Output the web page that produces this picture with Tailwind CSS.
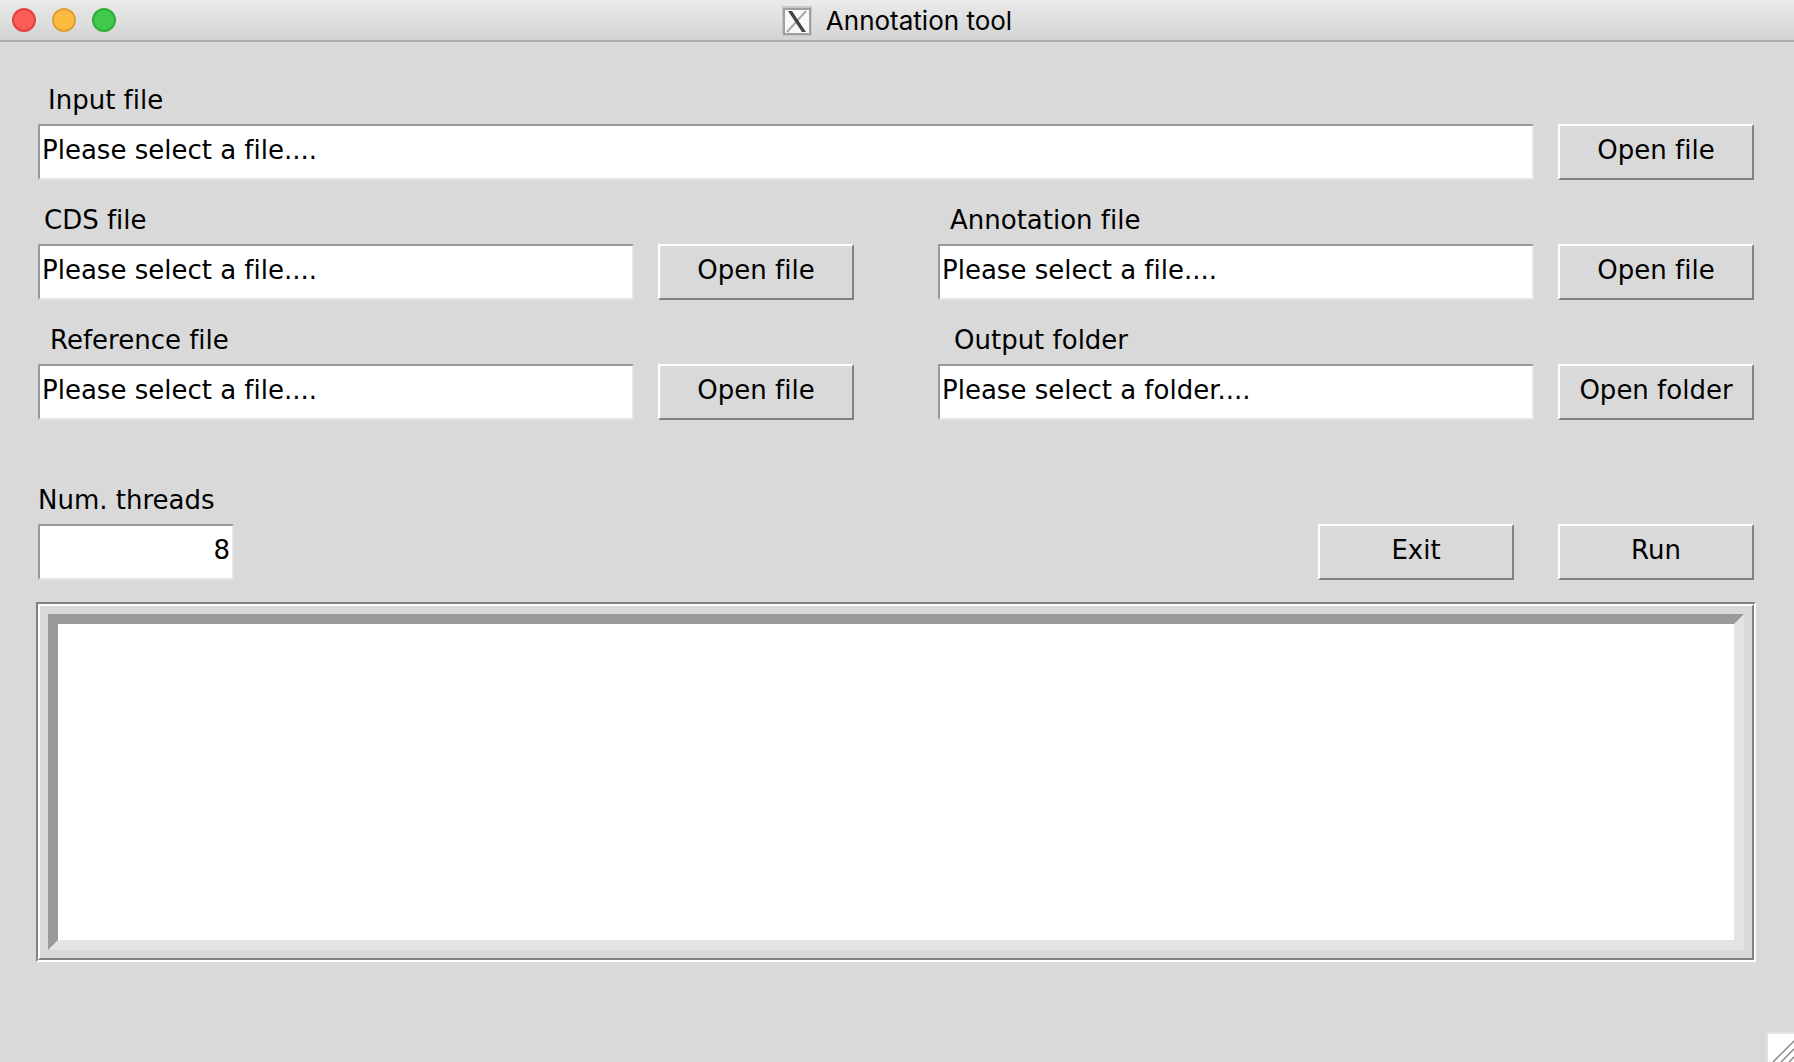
<!DOCTYPE html>
<html lang="en">
<head>
<meta charset="utf-8">
<title>Annotation tool</title>
<script src="https://cdn.jsdelivr.net/npm/@tailwindcss/browser@4"></script>
</head>
<body class="relative flex min-h-screen flex-col bg-[#d9d9d9] font-['DejaVu_Sans',sans-serif] text-[26px] leading-8 text-black [font-variant-ligatures:none]">
  <header class="relative flex h-[42px] items-center justify-center border-b-2 border-[#acacac] bg-linear-to-b from-[#ebebeb] to-[#d3d3d3]">
    <div class="absolute top-2 left-3 flex gap-4">
      <button type="button" aria-label="Close" class="size-6 rounded-full border-2 border-[#e0443e] bg-[#fc5b57]"></button>
      <button type="button" aria-label="Minimize" class="size-6 rounded-full border-2 border-[#dea035] bg-[#fdbc40]"></button>
      <button type="button" aria-label="Zoom" class="size-6 rounded-full border-2 border-[#2eae36] bg-[#42c84c]"></button>
    </div>
    <h1 class="flex items-center gap-3.5 pt-0.5 font-['Inter',sans-serif] text-[26px] leading-10">
      <svg class="size-[30px]" viewBox="0 0 30 30" fill="none" aria-hidden="true">
        <rect x="0" y="0" width="30" height="30" fill="#c8c8c8"/>
        <rect x="2" y="3" width="26" height="25" fill="#f8f8f8" stroke="#a0a0a0" stroke-width="2"/>
        <path d="M24 5 5 26" stroke="#aaa" stroke-width="2"/>
        <path d="M6 5h4l14 21h-4z" fill="#444"/>
      </svg>
      Annotation tool
    </h1>
  </header>

  <main class="flex flex-col pt-8 pr-10 pl-[38px]">
    <form class="grid grid-cols-2 gap-x-[84px]">
      <div class="col-span-2">
        <label for="input-file" class="block h-[50px] pt-2.5 pl-2.5">Input file</label>
        <div class="flex gap-6">
          <input id="input-file" type="text" value="Please select a file...." class="h-14 min-w-0 flex-1 border-2 border-t-[#999] border-r-[#e4e4e4] border-b-[#e4e4e4] border-l-[#999] bg-white pl-0.5 pb-1">
          <button type="button" class="h-14 w-[196px] border-2 border-t-white border-r-[#828282] border-b-[#828282] border-l-white pb-1">Open file</button>
        </div>
      </div>
      <div>
        <label for="cds-file" class="block h-16 pt-6 pl-1.5">CDS file</label>
        <div class="flex gap-6">
          <input id="cds-file" type="text" value="Please select a file...." class="h-14 min-w-0 flex-1 border-2 border-t-[#999] border-r-[#e4e4e4] border-b-[#e4e4e4] border-l-[#999] bg-white pl-0.5 pb-1">
          <button type="button" class="h-14 w-[196px] border-2 border-t-white border-r-[#828282] border-b-[#828282] border-l-white pb-1">Open file</button>
        </div>
      </div>
      <div>
        <label for="annotation-file" class="block h-16 pt-6 pl-3">Annotation file</label>
        <div class="flex gap-6">
          <input id="annotation-file" type="text" value="Please select a file...." class="h-14 min-w-0 flex-1 border-2 border-t-[#999] border-r-[#e4e4e4] border-b-[#e4e4e4] border-l-[#999] bg-white pl-0.5 pb-1">
          <button type="button" class="h-14 w-[196px] border-2 border-t-white border-r-[#828282] border-b-[#828282] border-l-white pb-1">Open file</button>
        </div>
      </div>
      <div>
        <label for="reference-file" class="block h-16 pt-6 pl-3">Reference file</label>
        <div class="flex gap-6">
          <input id="reference-file" type="text" value="Please select a file...." class="h-14 min-w-0 flex-1 border-2 border-t-[#999] border-r-[#e4e4e4] border-b-[#e4e4e4] border-l-[#999] bg-white pl-0.5 pb-1">
          <button type="button" class="h-14 w-[196px] border-2 border-t-white border-r-[#828282] border-b-[#828282] border-l-white pb-1">Open file</button>
        </div>
      </div>
      <div>
        <label for="output-folder" class="block h-16 pt-6 pl-4">Output folder</label>
        <div class="flex gap-6">
          <input id="output-folder" type="text" value="Please select a folder...." class="h-14 min-w-0 flex-1 border-2 border-t-[#999] border-r-[#e4e4e4] border-b-[#e4e4e4] border-l-[#999] bg-white pl-0.5 pb-1">
          <button type="button" class="h-14 w-[196px] border-2 border-t-white border-r-[#828282] border-b-[#828282] border-l-white pb-1">Open folder</button>
        </div>
      </div>
      <div class="col-span-2 flex items-end justify-between pt-10">
        <div>
          <label for="threads" class="block h-16 pt-6">Num. threads</label>
          <input id="threads" type="text" inputmode="numeric" value="8" class="block h-14 w-[196px] border-2 border-t-[#999] border-r-[#e4e4e4] border-b-[#e4e4e4] border-l-[#999] bg-white pr-0.5 pb-1 text-right">
        </div>
        <div class="flex gap-11">
          <button type="button" class="h-14 w-[196px] border-2 border-t-white border-r-[#828282] border-b-[#828282] border-l-white pb-1">Exit</button>
          <button type="button" class="h-14 w-[196px] border-2 border-t-white border-r-[#828282] border-b-[#828282] border-l-white pb-1">Run</button>
        </div>
      </div>
    </form>
    <div class="-mr-0.5 -ml-0.5 mt-[22px] border-2 border-t-[#828282] border-r-white border-b-white border-l-[#828282]">
      <div class="border-2 border-t-white border-r-[#828282] border-b-[#828282] border-l-white p-2">
        <textarea aria-label="Log output" readonly class="block h-[336px] w-full resize-none border-10 border-t-[#999] border-r-[#e4e4e4] border-b-[#e4e4e4] border-l-[#999] bg-white"></textarea>
      </div>
    </div>
  </main>

  <div class="absolute right-0 bottom-0 h-[30px] w-7 border-t-2 border-l-2 border-[#e2e2e2] bg-white">
    <svg class="size-full" viewBox="0 0 26 28" fill="none" stroke="#888" stroke-width="1.5" aria-hidden="true">
      <path d="M5 28 27 6M13 28 27 14M21 28l6-6"/>
    </svg>
  </div>
</body>
</html>
